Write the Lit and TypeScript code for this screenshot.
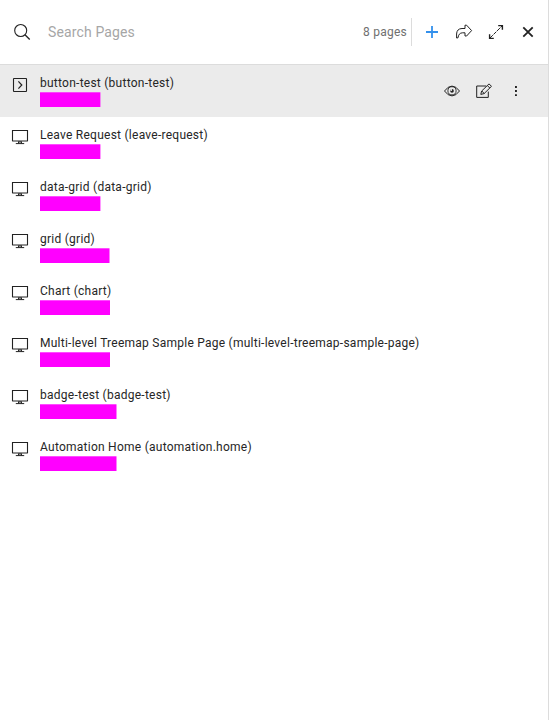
import { LitElement, html, css, svg } from "lit";
import { customElement, property } from "lit/decorators.js";

const icons: Record<string, unknown> = {
  search: svg`<circle cx="6.7" cy="6.5" r="6" stroke-width="1.1"/><path d="M11 10.8l4.7 4.7" stroke-width="1.3"/>`,
  plus: svg`<path d="M8 2v12M2 8h12" stroke="#3390ec" stroke-width="1.8"/>`,
  share: svg`<path d="M.6 14V10Q.8 4.7 6 4.5H9V1.2h1.6L15.6 6.6L10.6 12H9V8.8H6.4Q2.6 9 2 13.8Z" stroke-linejoin="round"/>`,
  expand: svg`<path d="M2 14L14 2" stroke-dasharray="4 1"/><path d="M10.2 1.6h4.2v4.2M1.6 10.2v4.2h4.2" stroke-width="1.4"/>`,
  close: svg`<path d="M3.3 3.3l9.4 9.4M12.7 3.3l-9.4 9.4" stroke-width="1.8"/>`,
  flow: svg`<rect x="1.5" y="1.5" width="13" height="13" rx=".5" stroke-width="1.1"/><path d="M6.4 4.4L9.8 8l-3.4 3.6" stroke-width="1.2"/>`,
  screen: svg`<path d="M.5 12V1.5h15V12" stroke-width="1.1"/><path d="M.2 12h15.6" stroke-width="1"/><path d="M6.8 12.3L6.3 14.5M9.2 12.3l.5 2.2M6.5 13h3M3.8 14.6h8.4" stroke-width="1"/>`,
  eye: svg`<path d="M.5 8Q4 3.1 8 3.1T15.5 8Q12 12.9 8 12.9T.5 8Z"/><circle cx="8" cy="7.8" r="4.1" stroke-width=".9"/><circle cx="8" cy="7.9" r="1.8" fill="#222" stroke="none"/><circle cx="7.3" cy="7" r=".9" fill="#ebebeb" stroke="none"/>`,
  edit: svg`<path d="M10 3H.7v11.4h11.6V8.6"/><path d="M4.8 11.4l.8-3.3L13 .9l2.5 2.4-7.4 7.3zM11.4 2.6l2.4 2.4M5.8 8l2.3 2.4" stroke-width="1"/>`,
  more: svg`<path d="M7 3h1.9v1.9H7zM7 7.1h1.9V9H7zM7 11.2h1.9v1.9H7z" fill="#222" stroke="none"/>`,
};

const pages = [
  { name: "button-test (button-test)", width: 60.4, icon: "flow", active: true },
  { name: "Leave Request (leave-request)", width: 60.4, icon: "screen" },
  { name: "data-grid (data-grid)", width: 60.4, icon: "screen" },
  { name: "grid (grid)", width: 69.5, icon: "screen" },
  { name: "Chart (chart)", width: 70, icon: "screen" },
  { name: "Multi-level Treemap Sample Page (multi-level-treemap-sample-page)", width: 70, icon: "screen" },
  { name: "badge-test (badge-test)", width: 76.5, icon: "screen" },
  { name: "Automation Home (automation.home)", width: 76.5, icon: "screen" },
];

@customElement("ui-icon")
class UiIcon extends LitElement {
  @property() name = "";
  static styles = css`
    :host { display: block; width: 16px; height: 16px; flex: none; }
    svg { display: block; overflow: visible; }
  `;
  render() {
    return html`<svg width="16" height="16" viewBox="0 0 16 16" fill="none" stroke="#222">${icons[this.name]}</svg>`;
  }
}

@customElement("app-root")
class AppRoot extends LitElement {
  static styles = css`
    :host {
      display: block; box-sizing: border-box; width: 549px; height: 720px;
      background: #fff; border-right: 1px solid #dcdcdc; overflow: hidden;
      font-family: Roboto, sans-serif; font-size: 12px; color: #262626;
    }
    .header {
      display: flex; align-items: center; box-sizing: border-box; height: 65px;
      padding: 0 12px 0 14px; border-bottom: 1px solid #dcdcdc;
    }
    .search { flex: 1; margin-left: 18px; font-size: 14px; letter-spacing: 0.13px; color: #a6a6a6; }
    .count { color: #707070; letter-spacing: 0.25px; padding-right: 4px; line-height: 28px; border-right: 1px solid #dcdcdc; }
    .tools { display: flex; gap: 16px; margin-left: 12px; }
    .row { display: flex; box-sizing: border-box; height: 52px; padding: 12px 24px 0 12px; }
    .row.active { background: #ebebeb; }
    .body { flex: 1; margin-left: 12px; }
    .name { line-height: 14px; margin-top: -1px; letter-spacing: 0.25px; white-space: nowrap; }
    .bar { display: block; margin-top: 2px; fill: #f0f; }
    .row .tools { margin-top: 6px; }
  `;
  render() {
    return html`
      <div class="header">
        <ui-icon name="search"></ui-icon>
        <div class="search">Search Pages</div>
        <div class="count">8 pages</div>
        <div class="tools">${["plus", "share", "expand", "close"].map((n) => html`<ui-icon name=${n}></ui-icon>`)}</div>
      </div>
      ${pages.map((p) => html`
        <div class="row ${p.active ? "active" : ""}">
          <ui-icon name=${p.icon}></ui-icon>
          <div class="body">
            <div class="name">${p.name}</div>
            <svg class="bar" width="80" height="15"><rect y="0.3" width=${p.width} height="14.7"/></svg>
          </div>
          ${p.active ? html`<div class="tools">${["eye", "edit", "more"].map((n) => html`<ui-icon name=${n}></ui-icon>`)}</div>` : ""}
        </div>`)}
    `;
  }
}
